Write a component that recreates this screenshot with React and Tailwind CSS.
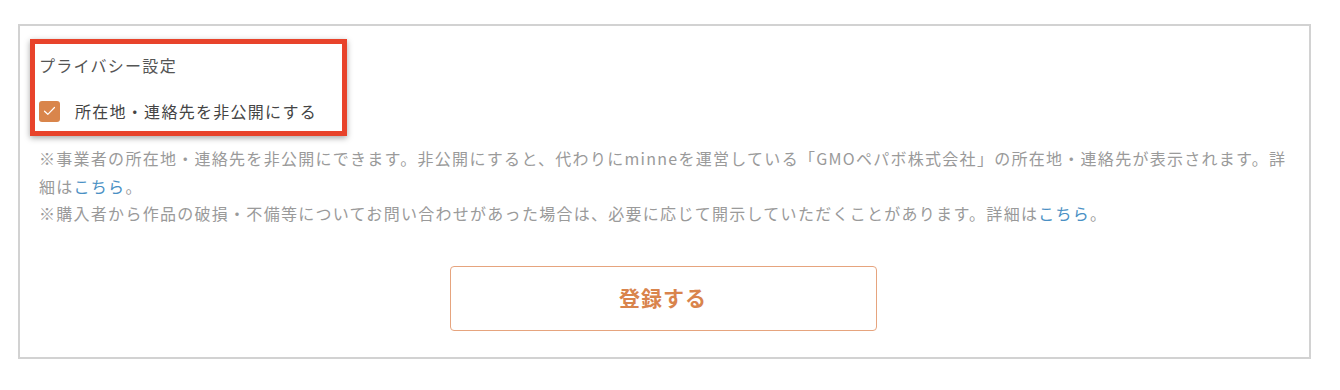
import { useState } from 'react'

function Check({ checked, onChange }) {
  return (
    <button
      type="button"
      onClick={onChange}
      className={`flex h-[21px] w-[21px] shrink-0 items-center justify-center rounded-[3px] ${checked ? 'bg-[#d9854b]' : 'border border-[#ccc] bg-white'}`}
    >
      {checked && (
        <svg width="13" height="10" viewBox="0 0 13 10" fill="none">
          <path d="M1.5 5.2 L4.8 8.3 L11.5 1.5" stroke="#fff" strokeWidth="1.2" strokeLinecap="round" strokeLinejoin="round" />
        </svg>
      )}
    </button>
  )
}

export default function App() {
  const [hidden, setHidden] = useState(true)

  return (
    <div className="min-h-[390px] bg-white pt-[24px] pl-[18px] font-['Noto_Sans_CJK_JP','Noto_Sans',sans-serif]">
      <div className="relative w-[1293px] border-2 border-[#d2d2d2] px-[19px] pt-[28px] pb-[26px] text-[16px] tracking-[0.08em]">
        <p className="leading-[22px] text-[#555]">プライバシー設定</p>

        <label className="mt-[24px] flex cursor-pointer items-center gap-[15px] leading-[22px] text-[#444]">
          <Check checked={hidden} onChange={() => setHidden(!hidden)} />
          <span>所在地・連絡先を非公開にする</span>
        </label>

        <div className="mt-[23px] leading-[27.5px] text-[#9a9a9a]">
          <p>
            ※事業者の所在地・連絡先を非公開にできます。非公開にすると、代わりにminneを運営している「GMOペパボ株式会社」の所在地・連絡先が表示されます。詳細は
            <a href="#" className="text-[#4a90c4]">こちら</a>。
          </p>
          <p>
            ※購入者から作品の破損・不備等についてお問い合わせがあった場合は、必要に応じて開示していただくことがあります。詳細は
            <a href="#" className="text-[#4a90c4]">こちら</a>。
          </p>
        </div>

        <div className="mt-[38px] flex justify-center">
          <button
            type="button"
            className="-ml-[3px] h-[65px] w-[427px] rounded-[4px] border border-[#e6a47e] bg-white text-[21px] font-bold tracking-[0.05em] text-[#d9844c]"
          >
            登録する
          </button>
        </div>

        {/* annotation frame */}
        <div className="pointer-events-none absolute top-[13px] left-[10px] h-[97px] w-[317px] border-[5px] border-[#e8432b] shadow-[0_2px_6px_rgba(0,0,0,0.35)]" />
      </div>
    </div>
  )
}
